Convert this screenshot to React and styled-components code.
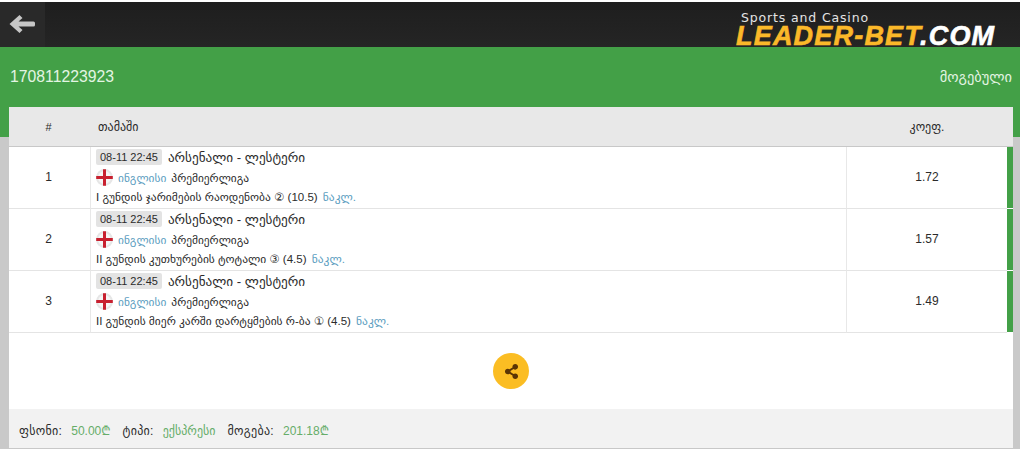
import { Fragment } from "react";
import styled, { createGlobalStyle } from "styled-components";
import { FaShareAlt } from "react-icons/fa";

const fontStack = `"Liberation Sans", "DejaVu Sans", "Noto Sans", sans-serif`;

const GlobalStyle = createGlobalStyle`
  html, body {
    margin: 0;
    padding: 0;
    background: #fff;
    font-family: ${fontStack};
    color: #2b2b2b;
  }
`;

const Page = styled.div`
  width: 1020px;
  height: 450px;
  overflow: hidden;
  padding-top: 2px;
  box-sizing: border-box;
`;

const Header = styled.header`
  height: 45px;
  background: linear-gradient(#1e1e1e, #252525);
  display: flex;
  justify-content: space-between;
`;

const BackButton = styled.div`
  width: 45px;
  background: #292929;
  display: flex;
  align-items: center;
  padding-left: 9px;
  padding-bottom: 1px;
  box-sizing: border-box;
`;

const Logo = styled.div`
  width: 284px;
  padding-top: 9px;
  box-sizing: border-box;
  display: flex;
  flex-direction: column;
`;

const LogoTagline = styled.div`
  font-family: "DejaVu Sans", sans-serif;
  font-size: 12.5px;
  line-height: 14px;
  letter-spacing: 0.85px;
  color: #e4e4e4;
  padding-left: 5px;
`;

const LogoName = styled.div`
  font-family: "Liberation Sans", sans-serif;
  font-size: 27px;
  line-height: 23px;
  font-weight: 700;
  font-style: italic;
  letter-spacing: 1.2px;
  white-space: nowrap;
  color: #fff;
  -webkit-text-stroke: 0.6px currentColor;
`;

const LogoGold = styled.span`
  color: #fbb829;
`;

const Main = styled.main`
  background: linear-gradient(#43a047 90px, #c9c9c9 90px);
  padding: 0 7px 0 9px;
`;

const TitleRow = styled.div`
  height: 60px;
  margin: 0 -7px 0 -9px;
  padding: 0 8px 0 10px;
  display: flex;
  align-items: center;
  justify-content: space-between;
  color: #e3f5e3;
  font-size: 15.75px;
`;

const Status = styled.span`
  font-size: 14.4px;
`;

const Card = styled.section`
  background: #fff;
  height: 342px;
  display: flex;
  flex-direction: column;
`;

const Grid = styled.div`
  display: grid;
  grid-template-columns: 81px 757px 160px 6px;
`;

const HeadCell = styled.div`
  height: 39px;
  background: #e8e8e8;
  border-bottom: 1px solid #c8c8c8;
  display: flex;
  align-items: center;
  justify-content: ${(p) => (p.$center ? "center" : "flex-start")};
  padding-left: ${(p) => (p.$center ? "0" : "8px")};
  padding-right: ${(p) => (p.$nudge ? "2px" : "0")};
  font-size: ${(p) => (p.$small ? "11px" : "12px")};
`;

const NumberCell = styled.div`
  height: 62px;
  box-sizing: border-box;
  border-bottom: 1px solid #e4e4e4;
  padding-bottom: 1px;
  display: flex;
  align-items: center;
  justify-content: center;
  font-size: 12px;
`;

const RowNumber = styled(NumberCell)`
  padding-right: 2px;
`;

const MatchCell = styled.div`
  height: 62px;
  box-sizing: border-box;
  border-bottom: 1px solid #e4e4e4;
  border-left: 1px solid #e8e8e8;
  border-right: 1px solid #e8e8e8;
  padding: 2px 0 4px 5px;
  display: flex;
  flex-direction: column;
  justify-content: space-between;
`;

const StateBar = styled.div`
  height: 62px;
  background: #43a047;
  border-bottom: 1px solid #fff;
  box-sizing: border-box;
`;

const Line = styled.div`
  display: flex;
  align-items: center;
  gap: ${(p) => p.$gap || "6px"};
  white-space: nowrap;
`;

const DateBadge = styled.span`
  background: #e3e3e3;
  border-radius: 2px;
  font-size: 11px;
  line-height: 16px;
  padding: 0 4px;
`;

const Teams = styled.span`
  font-size: 13.2px;
`;

const Country = styled.span`
  color: #5b9dc0;
  font-size: 11.4px;
`;

const League = styled.span`
  font-size: 11.4px;
`;

const Market = styled.div`
  font-size: 11.5px;
  line-height: 14px;
  white-space: nowrap;
`;

const Under = styled.span`
  color: #5b9dc0;
  margin-left: 2px;
`;

const ShareArea = styled.div`
  flex: 1;
  display: flex;
  align-items: center;
  justify-content: center;
`;

const ShareButton = styled.div`
  width: 36px;
  height: 36px;
  border-radius: 50%;
  background: #fbbd23;
  color: #5a3405;
  display: flex;
  align-items: center;
  justify-content: center;
  font-size: 15px;
`;

const Footer = styled.footer`
  height: 40px;
  background: #f2f2f2;
  border-bottom: 1px solid #c8c8c8;
  box-sizing: border-box;
  display: flex;
  align-items: baseline;
  padding: 13px 0 0 10px;
  gap: 12px;
  font-size: 12px;
  letter-spacing: 0.3px;
`;

const FooterItem = styled.span`
  display: flex;
  align-items: baseline;
  gap: 9px;
`;

const Value = styled.span`
  color: #66ad69;
  letter-spacing: 0;
`;

function BackArrow() {
  return (
    <svg width="26" height="20" viewBox="0 0 26 20">
      <path
        d="M10.5 1 L13.5 4 L9.5 7.5 H24.5 Q26 7.5 26 9 V11 Q26 12.5 24.5 12.5 H9.5 L13.5 16 L10.5 19 L0.5 10 Z"
        fill="#c6c6c6"
      />
    </svg>
  );
}

function EnglandFlag() {
  return (
    <svg width="17" height="17" viewBox="0 0 17 17">
      <circle cx="8.5" cy="8.5" r="8.5" fill="#e6e6e6" />
      <circle cx="8.5" cy="8.5" r="6.5" fill="#f6f6f6" />
      <path d="M7 0.2h3v16.6H7z M0.2 7h16.6v3H0.2z" fill="#c8202f" />
    </svg>
  );
}

const bets = [
  { id: 1, market: "I გუნდის ჯარიმების რაოდენობა ② (10.5)", odd: "1.72" },
  { id: 2, market: "II გუნდის კუთხურების ტოტალი ③ (4.5)", odd: "1.57" },
  { id: 3, market: "II გუნდის მიერ კარში დარტყმების რ-ბა ① (4.5)", odd: "1.49" },
];

export default function App() {
  return (
    <Page>
      <GlobalStyle />
      <Header>
        <BackButton>
          <BackArrow />
        </BackButton>
        <Logo>
          <LogoTagline>Sports and Casino</LogoTagline>
          <LogoName>
            <LogoGold>LEADER-BET</LogoGold>.COM
          </LogoName>
        </Logo>
      </Header>
      <Main>
        <TitleRow>
          <span>170811223923</span>
          <Status>მოგებული</Status>
        </TitleRow>
        <Card>
          <Grid>
            <HeadCell $center $small $nudge>
              #
            </HeadCell>
            <HeadCell>თამაში</HeadCell>
            <HeadCell $center>კოეფ.</HeadCell>
            <HeadCell $center />
            {bets.map((bet) => (
              <Fragment key={bet.id}>
                <RowNumber>{bet.id}</RowNumber>
                <MatchCell>
                  <Line>
                    <DateBadge>08-11 22:45</DateBadge>
                    <Teams>არსენალი - ლესტერი</Teams>
                  </Line>
                  <Line $gap="5px">
                    <EnglandFlag />
                    <Country>ინგლისი</Country>
                    <League>პრემიერლიგა</League>
                  </Line>
                  <Market>
                    {bet.market} <Under>ნაკლ.</Under>
                  </Market>
                </MatchCell>
                <NumberCell>{bet.odd}</NumberCell>
                <StateBar />
              </Fragment>
            ))}
          </Grid>
          <ShareArea>
            <ShareButton>
              <FaShareAlt />
            </ShareButton>
          </ShareArea>
          <Footer>
            <FooterItem>
              ფსონი: <Value>50.00₾</Value>
            </FooterItem>
            <FooterItem>
              ტიპი: <Value>ექსპრესი</Value>
            </FooterItem>
            <FooterItem>
              მოგება: <Value>201.18₾</Value>
            </FooterItem>
          </Footer>
        </Card>
      </Main>
    </Page>
  );
}
